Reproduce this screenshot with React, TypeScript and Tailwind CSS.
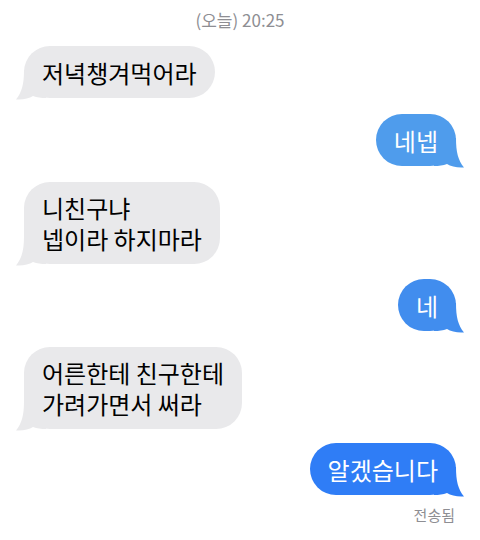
import React from "react";

type Msg = { from: "them" | "me"; lines: string[]; color?: string; mt: string };

const messages: Msg[] = [
  { from: "them", lines: ["저녁챙겨먹어라"], mt: "mt-0" },
  { from: "me", lines: ["네넵"], color: "#4f9cec", mt: "mt-[16px]" },
  { from: "them", lines: ["니친구냐", "넵이라 하지마라"], mt: "mt-[16px]" },
  { from: "me", lines: ["네"], color: "#418dee", mt: "mt-[15px]" },
  { from: "them", lines: ["어른한테 친구한테", "가려가면서 써라"], mt: "mt-[16px]" },
  { from: "me", lines: ["알겠습니다"], color: "#2f7df6", mt: "mt-[14px]" },
];

const Tail = ({ color, side }: { color: string; side: "left" | "right" }) => (
  <svg
    width="30"
    height="30"
    viewBox="0 0 30 30"
    className={
      side === "left"
        ? "absolute -left-[8px] -bottom-[2px]"
        : "absolute -right-[8px] -bottom-[2px] scale-x-[-1]"
    }
  >
    <path
      d="M8 0 C8 14 6 22 0 29.5 C7 30 13 28.5 17 26 C21 27.6 25 28 30 28 L30 0 Z"
      fill={color}
    />
  </svg>
);

const Bubble = ({ msg }: { msg: Msg }) => {
  const mine = msg.from === "me";
  const color = mine ? msg.color ?? "#2f7df6" : "#e9e9eb";
  return (
    <div
      className={
        (mine ? "flex justify-end pr-[24px] " : "flex justify-start pl-[24px] ") + msg.mt
      }
    >
      <div
        className={
          "relative rounded-[26px] px-[18px] text-[24px] leading-[31px] " +
          (msg.lines.length > 1 ? "py-[10px] " : "py-[10.5px] ") +
          (mine ? "text-white" : "text-black")
        }
        style={{ backgroundColor: color }}
      >
        <Tail color={color} side={mine ? "right" : "left"} />
        <div className="relative">
          {msg.lines.map((l, i) => (
            <div key={i}>{l}</div>
          ))}
        </div>
      </div>
    </div>
  );
};

export default function App() {
  return (
    <div
      className="w-[480px] h-[540px] bg-white overflow-hidden"
      style={{ fontFamily: '"Noto Sans CJK KR", "Noto Sans", sans-serif' }}
    >
      <div className="pt-[8px] text-center text-[17px] leading-[24px] text-[#8e8e93]">
        (오늘) 20:25
      </div>
      <div className="mt-[14px] flex flex-col">
        {messages.map((m, i) => (
          <Bubble key={i} msg={m} />
        ))}
      </div>
      <div className="mt-[10px] pr-[25px] text-right text-[15px] leading-[20px] text-[#8e8e93]">
        전송됨
      </div>
    </div>
  );
}
